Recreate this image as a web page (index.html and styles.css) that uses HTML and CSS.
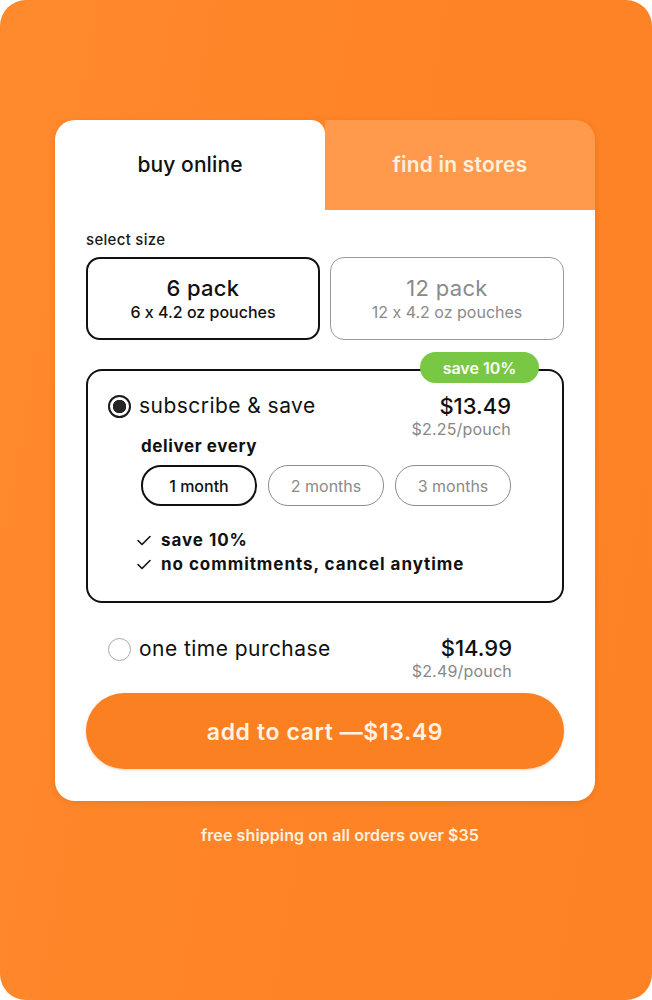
FILE: index.html
```html
<!DOCTYPE html>
<html>
<head>
<meta charset="utf-8">
<link rel="stylesheet" href="styles.css">
</head>
<body>
<div class="frame">
  <div class="card">
    <div class="tabs">
      <div class="tab tab-active">buy online</div>
      <div class="tab tab-idle">find in stores</div>
    </div>
    <div class="panel">
      <div class="label">select size</div>
      <div class="sizes">
        <div class="size size-on">
          <div class="size-title">6 pack</div>
          <div class="size-sub">6 x 4.2 oz pouches</div>
        </div>
        <div class="size size-off">
          <div class="size-title">12 pack</div>
          <div class="size-sub">12 x 4.2 oz pouches</div>
        </div>
      </div>
      <div class="sub-box">
        <div class="badge">save 10%</div>
        <div class="opt-row">
          <div class="opt-left">
            <span class="radio radio-on"></span>
            <span class="opt-name">subscribe &amp; save</span>
          </div>
          <div class="price">
            <div class="price-main">$13.49</div>
            <div class="price-unit">$2.25/pouch</div>
          </div>
        </div>
        <div class="deliver">deliver every</div>
        <div class="pills">
          <div class="pill pill-on">1 month</div>
          <div class="pill">2 months</div>
          <div class="pill">3 months</div>
        </div>
        <ul class="checks">
          <li><svg class="tick" viewBox="0 0 14 11" width="14" height="11"><polyline points="1,5.5 5,9.5 13,1.5" fill="none" stroke="#111" stroke-width="1.6" stroke-linecap="round" stroke-linejoin="round"/></svg>save 10%</li>
          <li><svg class="tick" viewBox="0 0 14 11" width="14" height="11"><polyline points="1,5.5 5,9.5 13,1.5" fill="none" stroke="#111" stroke-width="1.6" stroke-linecap="round" stroke-linejoin="round"/></svg>no commitments, cancel anytime</li>
        </ul>
      </div>
      <div class="opt-row once">
        <div class="opt-left">
          <span class="radio"></span>
          <span class="opt-name">one time purchase</span>
        </div>
        <div class="price">
          <div class="price-main">$14.99</div>
          <div class="price-unit">$2.49/pouch</div>
        </div>
      </div>
      <button class="cart">add to cart —$13.49</button>
    </div>
  </div>
  <div class="note">free shipping on all orders over $35</div>
</div>
</body>
</html>
```
FILE: styles.css
```css
* { box-sizing: border-box; }
html, body { margin: 0; padding: 0; background: #ffffff; }
body {
  font-family: "Inter", "Liberation Sans", sans-serif;
  font-feature-settings: "calt" 0;
  color: #111;
}

.frame {
  width: 652px;
  height: 1000px;
  border-radius: 26px;
  background: linear-gradient(100deg, #ff8a2e 0%, #fe8427 45%, #fd8224 100%);
  padding: 120px 57px 0 55px;
}

.card {
  width: 540px;
  border-radius: 20px;
  box-shadow: 0 2px 6px rgba(150, 70, 0, 0.18);
}

.tabs { display: flex; height: 90px; }
.tab {
  flex: 1;
  display: flex;
  align-items: center;
  justify-content: center;
  font-size: 21px;
  padding-bottom: 2px;
}
.tab-active {
  background: #fff;
  border-radius: 20px 14px 0 0;
  color: #111;
  font-weight: 500;
  letter-spacing: 0.1px;
}
.tab-idle {
  background: #ff9a4d;
  border-radius: 0 20px 0 0;
  color: #fff0dc;
  font-weight: 600;
  letter-spacing: 0.2px;
}

.panel {
  background: #fff;
  border-radius: 0 0 20px 20px;
  padding: 21px 31px 32px 31px;
}

.label {
  font-size: 15px;
  line-height: 18px;
  font-weight: 500;
  letter-spacing: 0.3px;
  color: #1a1a1a;
}

.sizes {
  display: grid;
  grid-template-columns: 1fr 1fr;
  gap: 10px;
  margin-top: 8px;
}
.size {
  height: 83px;
  border-radius: 14px;
  display: flex;
  flex-direction: column;
  align-items: center;
  justify-content: center;
  padding-top: 1px;
}
.size-on { border: 2px solid #111; color: #111; }
.size-off { border: 1.5px solid #999; color: #8a8a8a; }
.size-title { font-size: 22px; line-height: 26px; letter-spacing: 0.3px; }
.size-sub { font-size: 16px; line-height: 22px; }
.size-on .size-title, .size-on .size-sub { font-weight: 500; }
.size-off .size-title, .size-off .size-sub { font-weight: 400; }

.sub-box {
  position: relative;
  margin-top: 29px;
  height: 234px;
  border: 2px solid #111;
  border-radius: 16px;
  padding: 23px 51px 0 20px;
}
.badge {
  position: absolute;
  top: -19px;
  right: 23px;
  width: 119px;
  height: 31px;
  border-radius: 16px;
  background: #79c843;
  color: #fff;
  font-size: 16px;
  font-weight: 600;
  display: flex;
  align-items: center;
  justify-content: center;
}

.opt-row {
  display: flex;
  justify-content: space-between;
  align-items: flex-start;
}
.opt-left {
  display: flex;
  align-items: center;
  height: 24px;
}
.radio {
  width: 23px;
  height: 23px;
  border-radius: 50%;
  border: 1.5px solid #aaa;
  margin-right: 8px;
  flex: none;
}
.radio-on {
  border: 2.5px solid #1a1a1a;
  background: radial-gradient(circle, #262626 0 6.4px, #fff 7px);
}
.opt-name { font-size: 21px; line-height: 24px; color: #111; font-weight: 400; letter-spacing: 0.45px; }
.price { text-align: right; }
.price-main { font-size: 22px; line-height: 24px; font-weight: 500; color: #111; }
.price-unit { font-size: 16px; line-height: 22px; color: #888; letter-spacing: 0.2px; }

.deliver {
  margin-top: -4px;
  padding-left: 33px;
  font-size: 17px;
  line-height: 20px;
  font-weight: 700;
  letter-spacing: 0.6px;
  color: #111;
}

.pills {
  display: flex;
  gap: 11px;
  margin-top: 9px;
  padding-left: 33px;
}
.pill {
  width: 116px;
  height: 41px;
  border-radius: 20px;
  border: 1.5px solid #8c8c8c;
  color: #8a8a8a;
  font-size: 16px;
  display: flex;
  align-items: center;
  justify-content: center;
}
.pill-on { border: 2px solid #111; color: #111; font-weight: 500; }

.checks {
  list-style: none;
  margin: 22px 0 0 0;
  padding: 0 0 0 29px;
}
.checks li {
  font-size: 17px;
  line-height: 24px;
  font-weight: 700;
  letter-spacing: 0.95px;
  color: #111;
  display: flex;
  align-items: center;
}
.tick {
  flex: none;
  margin: 0 10px 0 0;
}

.once {
  margin-top: 33px;
  padding: 0 52px 0 22px;
}
.once .opt-left { margin-top: 1px; }

.cart {
  display: block;
  width: 100%;
  height: 76px;
  margin-top: 11px;
  padding-top: 3px;
  border: none;
  border-radius: 38px;
  background: #fb8022;
  color: #fff3e6;
  font-family: inherit;
  font-feature-settings: "calt" 0;
  font-size: 23px;
  font-weight: 600;
  letter-spacing: 0.6px;
  box-shadow: 0 1px 3px rgba(180, 80, 0, 0.25);
}

.note {
  margin-top: 24px;
  padding-left: 30px;
  text-align: center;
  color: #fff0dc;
  font-size: 16px;
  line-height: 20px;
  font-weight: 600;
  letter-spacing: 0.1px;
}
```
